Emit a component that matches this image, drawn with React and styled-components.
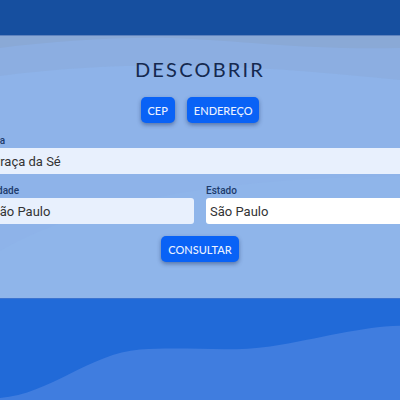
import React from "react";
import styled, { createGlobalStyle } from "styled-components";

const Global = createGlobalStyle`
  html, body { margin: 0; padding: 0; }
  body { width: 400px; height: 400px; overflow: hidden; font-family: Roboto, "Liberation Sans", sans-serif; }
  * { box-sizing: border-box; }
`;

const Page = styled.div`
  width: 400px;
  height: 400px;
  display: flex;
  flex-direction: column;
  overflow: hidden;
`;

const Header = styled.header`
  height: 36px;
  flex-shrink: 0;
  background: #164f9f;
  border-bottom: 1px solid #5f83be;
`;

const Panel = styled.main`
  position: relative;
  height: 262px;
  flex-shrink: 0;
  background: #8eb3e9;
  display: flex;
  flex-direction: column;
  align-items: center;
  padding-top: 21px;
`;

const Backdrop = styled.svg`
  position: absolute;
  inset: 0;
  width: 100%;
  height: 100%;
  z-index: 0;
`;

const Content = styled.div`
  position: relative;
  z-index: 1;
  width: 100%;
  display: flex;
  flex-direction: column;
  align-items: center;
`;

const Title = styled.h1`
  margin: 0;
  font-family: Lato, "Noto Sans", sans-serif;
  font-weight: 400;
  font-size: 20px;
  line-height: 24px;
  letter-spacing: 2.2px;
  color: #15294f;
`;

const Tabs = styled.div`
  display: flex;
  gap: 12px;
  margin-top: 16px;
`;

const Button = styled.button`
  height: 26px;
  padding: 0 7px;
  border: none;
  border-radius: 5px;
  background: #0962f6;
  color: #eaf1ff;
  font-family: Lato, "Noto Sans", sans-serif;
  font-weight: 500;
  font-size: 11px;
  box-shadow: 0 2px 4px rgba(20, 40, 90, 0.45);
  cursor: pointer;
`;

const FormRow = styled.div`
  width: 100%;
  display: flex;
  justify-content: center;
  margin-top: 12px;
`;

const Form = styled.div`
  width: 424px;
  flex-shrink: 0;
  display: grid;
  grid-template-columns: 1fr 1fr;
  column-gap: 12px;
  row-gap: 11px;
`;

const Field = styled.label`
  display: flex;
  flex-direction: column;
  grid-column: ${(p) => (p.$full ? "1 / -1" : "auto")};
`;

const Label = styled.span`
  font-size: 10px;
  line-height: 12px;
  color: #1d3b6c;
  font-weight: 500;
  margin-bottom: 1px;
`;

const Input = styled.input`
  height: 26px;
  border: none;
  border-radius: 3px;
  padding: 0 4px;
  font-family: Roboto, "Liberation Sans", sans-serif;
  font-size: 13px;
  color: #333;
  background: ${(p) => (p.$filled ? "#e8f0fd" : "#ffffff")};
  outline: none;
`;

const Actions = styled.div`
  margin-top: 12px;
`;

const Footer = styled.footer`
  position: relative;
  flex: 1;
  background: #216ad8;
  border-top: 1px solid #3b73d0;
`;

export default function App() {
  return (
    <>
      <Global />
      <Page>
        <Header />
        <Panel>
          <Backdrop viewBox="0 0 400 262" preserveAspectRatio="none">
            <path d="M0 12 C 50 6, 110 1, 170 2 C 250 5, 300 14, 400 12 L400 0 L0 0 Z" fill="#8aa9d6" />
            <path d="M0 40 C 140 22, 260 30, 400 44 L400 0 L0 0 Z" fill="#8aa9d6" opacity="0.45" />
            <path d="M0 215 C 60 180, 160 150, 330 142 L400 140 L400 262 L0 262 Z" fill="#8fb5ea" />
          </Backdrop>
          <Content>
            <Title>DESCOBRIR</Title>
            <Tabs>
              <Button>CEP</Button>
              <Button>ENDEREÇO</Button>
            </Tabs>
            <FormRow>
              <Form>
                <Field $full>
                  <Label>Rua</Label>
                  <Input $filled defaultValue="Praça da Sé" />
                </Field>
                <Field>
                  <Label>Cidade</Label>
                  <Input $filled defaultValue="São Paulo" />
                </Field>
                <Field>
                  <Label>Estado</Label>
                  <Input defaultValue="São Paulo" />
                </Field>
              </Form>
            </FormRow>
            <Actions>
              <Button>CONSULTAR</Button>
            </Actions>
          </Content>
        </Panel>
        <Footer>
          <Backdrop viewBox="0 0 400 102" preserveAspectRatio="none">
            <path d="M0 100 C 50 96, 90 55, 140 51 C 190 48, 230 54, 270 48 C 320 40, 360 28, 400 27 L400 102 L0 102 Z" fill="#407ddf" />
          </Backdrop>
        </Footer>
      </Page>
    </>
  );
}
